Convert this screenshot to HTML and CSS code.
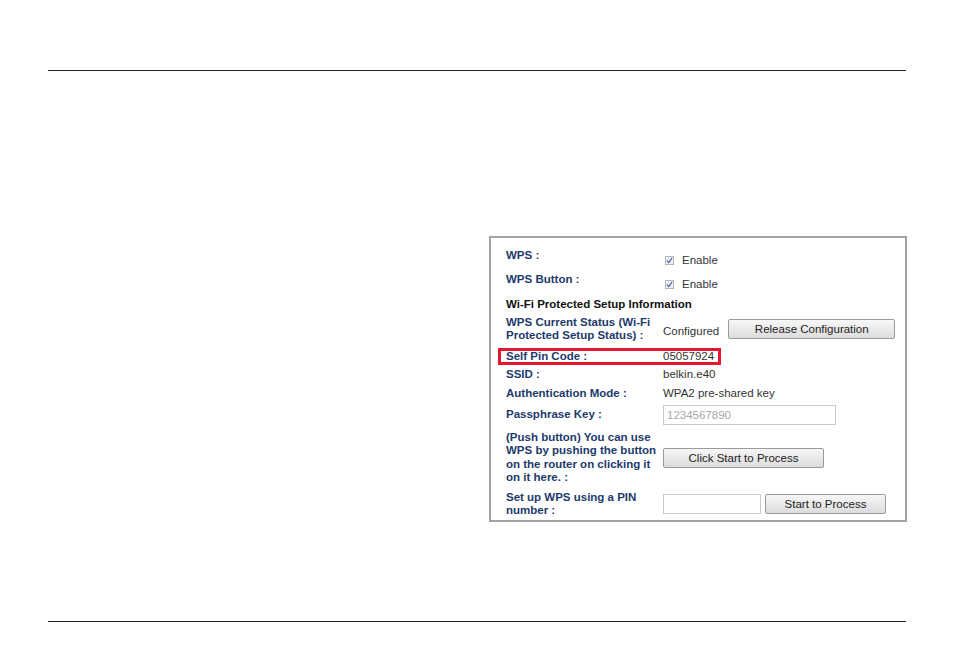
FILE: index.html
```html
<!DOCTYPE html>
<html>
  <head>
    <link rel="stylesheet" href="styles.css">
  </head>
  <body>
    <div class="page">
      <div class="rule rule-top"></div>

      <div class="panel">
        <div class="row r-wps">
          <div class="label">WPS :</div>
          <div class="value val-check"><span class="check"><svg width="7" height="7" viewBox="0 0 7 7"><path d="M1 3.6 L2.8 5.6 L6 1" fill="none" stroke="#3b5fb8" stroke-width="1.2"/></svg></span>Enable</div>
        </div>

        <div class="row r-wps">
          <div class="label">WPS Button :</div>
          <div class="value val-check"><span class="check"><svg width="7" height="7" viewBox="0 0 7 7"><path d="M1 3.6 L2.8 5.6 L6 1" fill="none" stroke="#3b5fb8" stroke-width="1.2"/></svg></span>Enable</div>
        </div>

        <div class="row r-head">
          <div class="heading">Wi-Fi Protected Setup Information</div>
        </div>

        <div class="row r-status">
          <div class="label">WPS Current Status (Wi-Fi Protected Setup Status) :</div>
          <div class="value val-mid">
            <span class="configured">Configured</span>
            <button class="btn btn-release">Release Configuration</button>
          </div>
        </div>

        <div class="row r-pin">
          <div class="highlight">
            <div class="label">Self Pin Code :</div>
            <div class="value">05057924</div>
          </div>
        </div>

        <div class="row r-ssid">
          <div class="label">SSID :</div>
          <div class="value">belkin.e40</div>
        </div>

        <div class="row r-auth">
          <div class="label">Authentication Mode :</div>
          <div class="value">WPA2 pre-shared key</div>
        </div>

        <div class="row r-pass">
          <div class="label">Passphrase Key :</div>
          <div class="value val-mid"><input class="field field-pass" type="text" value="1234567890" disabled></div>
        </div>

        <div class="row r-push">
          <div class="label">(Push button) You can use WPS by pushing the button on the router on clicking it on it here. :</div>
          <div class="value val-mid"><button class="btn btn-click">Click Start to Process</button></div>
        </div>

        <div class="row r-pinset">
          <div class="label">Set up WPS using a PIN number :</div>
          <div class="value val-mid">
            <input class="field field-pin" type="text">
            <button class="btn btn-start">Start to Process</button>
          </div>
        </div>
      </div>

      <div class="rule rule-bottom"></div>
    </div>
  </body>
</html>
```

FILE: styles.css
```css
* {
  box-sizing: border-box;
}

body {
  margin: 0;
  font-family: "Liberation Sans", Arial, sans-serif;
  font-size: 11.5px;
  color: #333;
  background: #fff;
}

.page {
  padding: 0 48px;
}

.rule {
  height: 1px;
  background: #231f20;
}

.rule-top {
  margin-top: 70px;
}

.rule-bottom {
  margin-top: 99px;
}

.panel {
  margin-top: 165px;
  margin-left: 441px;
  width: 418px;
  height: 286px;
  border: 2px solid #a3a3a3;
  padding: 8px 0 0 15px;
}

.row {
  display: flex;
}

.label {
  width: 157px;
  flex: none;
  font-weight: bold;
  color: #1d3a6c;
  line-height: 13px;
  padding-right: 4px;
}

.value {
  line-height: 13px;
}

.val-mid {
  display: flex;
  align-items: center;
}

.val-check {
  display: flex;
  align-items: center;
}

.check {
  display: inline-flex;
  align-items: center;
  justify-content: center;
  width: 9px;
  height: 9px;
  border: 1px solid #b5b5b5;
  background: #eef0f4;
  margin: 0 8px 0 2px;
}

.r-wps {
  height: 24px;
}

.r-wps .label {
  padding-top: 3px;
}

.r-wps .value {
  padding-top: 4px;
}

.r-head {
  height: 20px;
  padding-top: 4px;
}

.heading {
  font-weight: bold;
  color: #111;
  line-height: 13px;
}

.r-status {
  height: 30px;
}

.r-status .label {
  padding-top: 2px;
}

.configured {
  padding-top: 5px;
  margin-right: 9px;
}

.btn {
  font-family: "Liberation Sans", Arial, sans-serif;
  font-size: 11.5px;
  color: #222;
  height: 20px;
  border: 1px solid #9a9a9a;
  border-radius: 2px;
  background: linear-gradient(#f7f7f7, #dcdcdc);
  padding: 0;
}

.btn-release {
  width: 167px;
}

.btn-click {
  width: 161px;
  margin-bottom: 6px;
}

.btn-start {
  width: 121px;
  margin-left: 4px;
}

.r-pin {
  height: 22px;
  padding-top: 4px;
}

.highlight {
  display: flex;
  margin-left: -8px;
  width: 223px;
  height: 17px;
  border: 3px solid #e3172d;
  padding-left: 5px;
}

.highlight .label {
  line-height: 11px;
}

.highlight .value {
  line-height: 11px;
}

.r-ssid {
  height: 17px;
  padding-top: 2px;
}

.r-auth {
  height: 20px;
  padding-top: 4px;
}

.r-pass {
  height: 27px;
  padding-bottom: 3px;
}

.r-pass .label {
  padding-top: 5px;
}

.field {
  height: 20px;
  border: 1px solid #c9c9c9;
  font-family: "Liberation Sans", Arial, sans-serif;
  font-size: 11.5px;
  color: #a8a8a8;
  background: #fff;
  padding: 0 3px;
}

.field-pass {
  width: 173px;
}

.field-pin {
  width: 98px;
}

.r-push {
  height: 61px;
  padding-top: 1px;
}

.r-push .label {
  line-height: 13.3px;
}

.r-pinset {
  height: 28px;
}

.r-pinset .value {
  padding-bottom: 2px;
}
```
